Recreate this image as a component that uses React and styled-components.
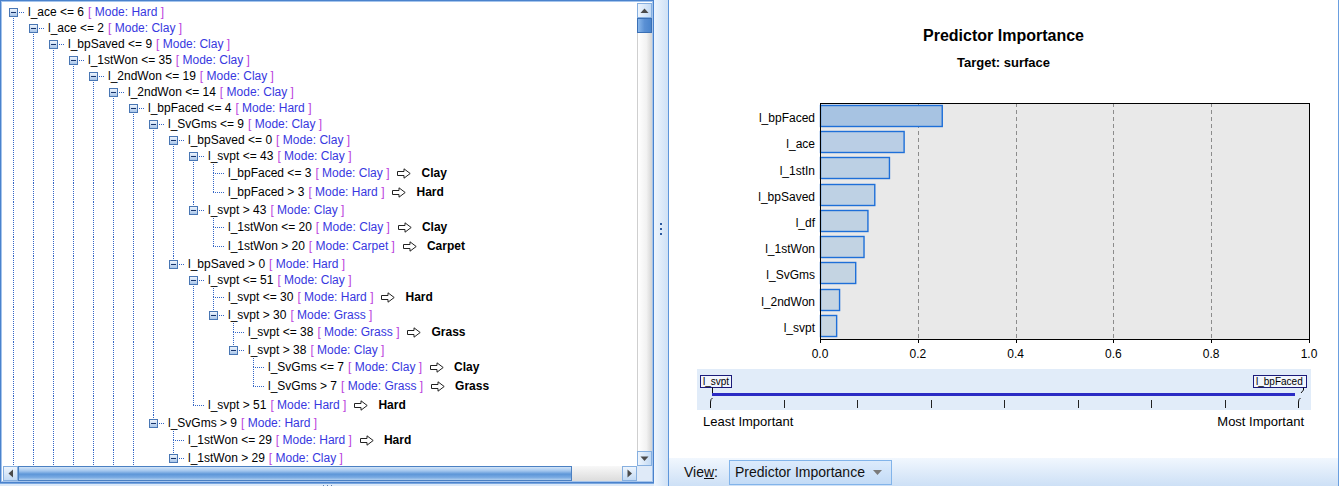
import React from "react";
import styled, { createGlobalStyle } from "styled-components";

const DOT = "#3466c6";
const VISIBLE_ROWS = 27;

const GlobalStyle = createGlobalStyle`
  html, body { margin: 0; padding: 0; background: #ffffff; overflow: hidden; }
  body { font-family: "Liberation Sans", Arial, sans-serif; color: #000; }
`;

// tree data: N = expanded node, L = leaf with prediction, C = collapsed node
const L = (label, mode) => ({ label, mode, result: mode });
const N = (label, mode, ...children) => ({ label, mode, children });
const C = (label, mode) => ({ label, mode, children: [], collapsed: true });

const svptBranch = N("l_bpSaved > 0", "Hard",
  N("l_svpt <= 51", "Clay",
    L("l_svpt <= 30", "Hard"),
    N("l_svpt > 30", "Grass",
      L("l_svpt <= 38", "Grass"),
      N("l_svpt > 38", "Clay",
        L("l_SvGms <= 7", "Clay"),
        L("l_SvGms > 7", "Grass")
      )
    )
  ),
  L("l_svpt > 51", "Hard")
);

const svGmsLow = N("l_SvGms <= 9", "Clay",
  N("l_bpSaved <= 0", "Clay",
    N("l_svpt <= 43", "Clay",
      L("l_bpFaced <= 3", "Clay"),
      L("l_bpFaced > 3", "Hard")
    ),
    N("l_svpt > 43", "Clay",
      L("l_1stWon <= 20", "Clay"),
      L("l_1stWon > 20", "Carpet")
    )
  ),
  svptBranch
);

const svGmsHigh = N("l_SvGms > 9", "Hard",
  L("l_1stWon <= 29", "Hard"),
  N("l_1stWon > 29", "Clay",
    L("l_df <= 2", "Clay"),
    L("l_df > 2", "Hard")
  )
);

const tree = [
  N("l_ace <= 6", "Hard",
    N("l_ace <= 2", "Clay",
      N("l_bpSaved <= 9", "Clay",
        N("l_1stWon <= 35", "Clay",
          N("l_2ndWon <= 19", "Clay",
            N("l_2ndWon <= 14", "Clay",
              N("l_bpFaced <= 4", "Hard", svGmsLow, svGmsHigh),
              C("l_bpFaced > 4", "Hard")
            ),
            C("l_2ndWon > 14", "Hard")
          ),
          C("l_2ndWon > 19", "Hard")
        ),
        C("l_1stWon > 35", "Grass")
      ),
      C("l_bpSaved > 9", "Hard")
    ),
    C("l_ace > 2", "Hard")
  ),
  C("l_ace > 6", "Hard"),
];

function flatten(nodes, depth, guides, out) {
  nodes.forEach((n, i) => {
    const hasNext = i < nodes.length - 1;
    out.push({ ...n, depth, guides, hasNext, first: i === 0 });
    if (n.children && !n.collapsed) flatten(n.children, depth + 1, [...guides, hasNext], out);
  });
}

const predictors = [
  ["l_bpFaced", 0.249, "#a7c3e2"],
  ["l_ace", 0.171, "#bacee5"],
  ["l_1stIn", 0.141, "#bcd0e4"],
  ["l_bpSaved", 0.111, "#bed1e4"],
  ["l_df", 0.097, "#c0d2e3"],
  ["l_1stWon", 0.089, "#c2d3e3"],
  ["l_SvGms", 0.072, "#c4d4e2"],
  ["l_2ndWon", 0.039, "#c6d5e2"],
  ["l_svpt", 0.033, "#c8d6e1"],
];

const vd = `repeating-linear-gradient(to bottom, ${DOT} 0 1px, transparent 1px 2px)`;
const hd = `repeating-linear-gradient(to right, ${DOT} 0 1px, transparent 1px 2px)`;

const jointBg = ({ $top, $bottom, $leaf, $cy }) => {
  const layers = [];
  if ($top) layers.push(`${vd} 10px 0 / 1px ${$cy}px no-repeat`);
  if ($bottom) layers.push(`${vd} 10px ${$cy}px / 1px calc(100% - ${$cy}px) no-repeat`);
  layers.push($leaf ? `${hd} 10px ${$cy}px / 12px 1px no-repeat` : `${hd} 16px ${$cy}px / 6px 1px no-repeat`);
  return layers.join(", ");
};

const Screen = styled.div`
  display: flex;
  width: 1340px;
  height: 486px;
  overflow: hidden;
`;

const LeftPane = styled.div`
  width: 654px;
  flex-shrink: 0;
  display: flex;
  flex-direction: column;
  background: #dce9f8;
`;

const Frame = styled.div`
  height: 483px;
  box-sizing: border-box;
  border: 1px solid #4a82cc;
  box-shadow: inset 0 0 0 1px #a4c4ec;
  padding: 2px 1px 1px 2px;
  background: #ffffff;
  display: grid;
  grid-template-columns: 1fr 15px;
  grid-template-rows: 1fr 15px;
`;

const TreeView = styled.div`
  overflow: hidden;
  min-width: 0;
  min-height: 0;
  padding-top: 1px;
  background: #ffffff;
`;

const Row = styled.div`
  display: flex;
  align-items: flex-start;
  height: ${(p) => (p.$leaf ? 19 : 16)}px;
  white-space: nowrap;
  font-size: 12px;
`;

const Guide = styled.span`
  width: 20px;
  flex-shrink: 0;
  align-self: stretch;
  background: ${(p) => (p.$on ? `${vd} 10px 0 / 1px 100% no-repeat` : "none")};
`;

const Joint = styled.span`
  width: 22px;
  flex-shrink: 0;
  align-self: stretch;
  display: flex;
  align-items: flex-start;
  background: ${jointBg};
`;

const Toggle = styled.span`
  width: 9px;
  height: 9px;
  box-sizing: border-box;
  margin: 4px 0 0 6px;
  border: 1px solid #4876b4;
  background: linear-gradient(#16346c, #16346c) center / 5px 1px no-repeat,
    ${(p) => (p.$open ? "" : "linear-gradient(#16346c, #16346c) center / 1px 5px no-repeat,")}
    linear-gradient(#eef4fc, #a9c6ea);
`;

const NodeText = styled.span`
  display: flex;
  align-items: center;
  margin-left: 3px;
  line-height: ${(p) => (p.$leaf ? 18 : 16)}px;
  height: ${(p) => (p.$leaf ? 18 : 16)}px;
`;

const Cond = styled.span`
  color: #000;
`;

const Mode = styled.span`
  color: #3838e0;
  margin-left: 4px;
`;

const Bracket = styled.span`
  color: #bb44dd;
`;

const ArrowIcon = styled.svg`
  margin: 0 10px 0 8px;
  flex-shrink: 0;
`;

const Result = styled.span`
  font-weight: bold;
`;

const VScroll = styled.div`
  display: flex;
  flex-direction: column;
  min-height: 0;
`;

const HScroll = styled.div`
  display: flex;
  min-width: 0;
`;

const ScrollBtn = styled.div`
  width: 15px;
  height: 15px;
  flex-shrink: 0;
  box-sizing: border-box;
  border: 1px solid #86afdf;
  background: linear-gradient(${(p) => (p.$h ? "to bottom" : "to right")}, #eef5fd, #c3daf4);
  display: flex;
  align-items: center;
  justify-content: center;
`;

const VThumb = styled.div`
  height: 15px;
  flex-shrink: 0;
  box-sizing: border-box;
  border: 1px solid #3a6fb5;
  background: linear-gradient(to right, #8ab8ec, #5a90d4 50%, #4a84cc);
`;

const VTrack = styled.div`
  flex: 1;
  box-sizing: border-box;
  border-left: 1px solid #cfcfcf;
  background: linear-gradient(to right, #ffffff, #f2f2f2 60%, #d4d4d4);
`;

const HThumb = styled.div`
  width: 554px;
  flex-shrink: 0;
  box-sizing: border-box;
  border: 1px solid #4b80c2;
  background: linear-gradient(to bottom, #d3e5f8 0%, #a3c6ee 30%, #5d96d8 55%, #79aae2 80%, #b2d0f0 100%);
`;

const HTrack = styled.div`
  flex: 1;
  background: linear-gradient(#f8f8f8, #dcdcdc);
`;

const Corner = styled.div`
  background: #dfeaf8;
`;

const PaneFoot = styled.div`
  flex: 1;
  display: flex;
  align-items: center;
  justify-content: center;
  border-top: 1px solid #7aa7df;
`;

const FootGrip = styled.span`
  width: 9px;
  height: 1px;
  background: repeating-linear-gradient(to right, #5a7fb0 0 1px, transparent 1px 4px);
`;

const Splitter = styled.div`
  width: 15px;
  flex-shrink: 0;
  box-sizing: border-box;
  border-right: 1px solid #5e96da;
  background: linear-gradient(to right, #eef5fd, #cfe1f6);
  display: flex;
  justify-content: center;
  padding-top: 223px;
`;

const SplitGrip = styled.span`
  width: 2px;
  height: 12px;
  background: repeating-linear-gradient(to bottom, #2c5aa0 0 2px, transparent 2px 5px);
`;

const RightPane = styled.div`
  flex: 1;
  margin-right: 1px;
  border-right: 1px solid #6a9fe0;
  display: flex;
  flex-direction: column;
  background: #ffffff;
  min-width: 0;
`;

const Viewer = styled.div`
  flex: 1;
  display: flex;
  flex-direction: column;
`;

const Title = styled.div`
  margin-top: 27px;
  text-align: center;
  font-size: 16px;
  font-weight: bold;
  line-height: 18px;
`;

const Subtitle = styled.div`
  margin-top: 10px;
  text-align: center;
  font-size: 13px;
  font-weight: bold;
  line-height: 16px;
`;

const ChartSvg = styled.svg`
  display: block;
  margin-top: 19px;
  font-family: "Liberation Sans", Arial, sans-serif;
  font-size: 12px;
`;

const SliderBox = styled.div`
  margin: 7px 0 0 28px;
  width: 614px;
  height: 41px;
  background: #e1ecf9;
`;

const SliderSvg = styled.svg`
  display: block;
  font-family: "Liberation Sans", Arial, sans-serif;
  font-size: 10px;
`;

const RangeLabels = styled.div`
  margin-top: 5px;
  display: flex;
  justify-content: space-between;
  padding: 0 34px;
  font-size: 13px;
  line-height: 14px;
`;

const ViewBar = styled.div`
  height: 28px;
  flex-shrink: 0;
  display: flex;
  align-items: center;
  gap: 11px;
  padding-left: 15px;
  background: linear-gradient(#f1f7fe, #cde0f6);
  font-size: 14px;
`;

const ViewLabel = styled.span`
  color: #111;
`;

const Dropdown = styled.div`
  width: 163px;
  height: 25px;
  box-sizing: border-box;
  border: 1px solid #82b4ea;
  background: linear-gradient(#dcebfc, #c3dbf6);
  display: flex;
  align-items: center;
  gap: 8px;
  padding-left: 5px;
  color: #111;
`;

const Tri = ({ dir }) => {
  const pts = {
    up: "0.5,5 4.5,0.5 8.5,5",
    down: "0.5,0.5 8.5,0.5 4.5,5",
    left: "5,0.5 5,8.5 0.5,4.5",
    right: "0.5,0.5 0.5,8.5 5,4.5",
  }[dir];
  const horiz = dir === "left" || dir === "right";
  return (
    <svg width={horiz ? 6 : 9} height={horiz ? 9 : 6}>
      <polygon points={pts} fill="#4a4a4a" />
    </svg>
  );
};

const Arrow = () => (
  <ArrowIcon width="14" height="11" viewBox="0 0 14 11">
    <path d="M0.5 3.5 H7 V0.8 L13.2 5.5 L7 10.2 V7.5 H0.5 Z" fill="#fff" stroke="#222" strokeWidth="1" strokeLinejoin="miter" />
  </ArrowIcon>
);

const TreeRow = ({ row, isRoot }) => {
  const leaf = !row.children;
  const cy = leaf ? 9 : 8;
  return (
    <Row $leaf={leaf}>
      {row.guides.map((on, k) => (
        <Guide key={k} $on={on} />
      ))}
      <Joint $leaf={leaf} $top={!isRoot && (!row.first || leaf)} $bottom={row.hasNext} $cy={cy}>
        {!leaf && <Toggle $open={!row.collapsed} />}
      </Joint>
      <NodeText $leaf={leaf}>
        <Cond>{row.label}</Cond>
        <Mode>
          <Bracket>[</Bracket> Mode: {row.mode} <Bracket>]</Bracket>
        </Mode>
        {leaf && (
          <>
            <Arrow />
            <Result>{row.result}</Result>
          </>
        )}
      </NodeText>
    </Row>
  );
};

const ImportanceChart = () => {
  const PL = 151, PR = 640, PT = 13, PB = 249;
  const W = PR - PL;
  const band = (PB - PT) / predictors.length;
  const ticks = [0, 0.2, 0.4, 0.6, 0.8, 1];
  return (
    <ChartSvg width="669" height="272" viewBox="0 0 669 272">
      <rect x={PL} y={PT} width={W} height={PB - PT} fill="#e9e9e9" />
      {ticks.slice(1, -1).map((t) => {
        const x = Math.round(PL + t * W) + 0.5;
        return <line key={t} x1={x} x2={x} y1={PT} y2={PB} stroke="#8c8c8c" strokeDasharray="4 3" />;
      })}
      {predictors.map(([name, v, fill], i) => {
        const y = Math.round(PT + i * band + 2) + 0.5;
        return (
          <g key={name}>
            <rect x={PL + 0.5} y={y} width={v * W} height={21} fill={fill} stroke="#1e6fd8" strokeWidth="1.4" />
            <text x={PL - 5} y={PT + (i + 0.5) * band + 6} textAnchor="end">
              {name}
            </text>
          </g>
        );
      })}
      <rect x={PL + 0.5} y={PT + 0.5} width={W} height={PB - PT} fill="none" stroke="#000" />
      {ticks.map((t) => {
        const x = Math.round(PL + t * W) + 0.5;
        return (
          <g key={t}>
            <line x1={x} x2={x} y1={PB} y2={PB + 4} stroke="#000" />
            <text x={PL + t * W} y={PB + 19} textAnchor="middle">
              {t.toFixed(1)}
            </text>
          </g>
        );
      })}
    </ChartSvg>
  );
};

const RangeSlider = () => {
  const ticks = [1, 2, 3, 4, 5, 6, 7].map((k) => Math.round(13 + 73.5 * k) + 0.5);
  return (
    <SliderBox>
      <SliderSvg width="614" height="41" viewBox="0 0 614 41">
        <rect x="3.5" y="6.5" width="31" height="12" fill="#f2f6fc" stroke="#1b1b7a" />
        <text x="6" y="16">l_svpt</text>
        <rect x="556.5" y="6.5" width="53" height="12" fill="#f2f6fc" stroke="#1b1b7a" />
        <text x="559" y="16">l_bpFaced</text>
        <path d="M15.5 18.5 V24" stroke="#111" fill="none" />
        <path d="M606.5 18.5 V21 L604 24" stroke="#111" fill="none" />
        <line x1="15" x2="598" y1="25.5" y2="25.5" stroke="#2b2bc4" strokeWidth="3" />
        <path d="M15.5 29 Q13.5 30 13.5 33 V39" stroke="#111" fill="none" />
        <path d="M603.5 29 Q601.5 30 601.5 33 V39" stroke="#111" fill="none" />
        {ticks.map((x) => (
          <line key={x} x1={x} x2={x} y1="31" y2="39" stroke="#222" />
        ))}
      </SliderSvg>
    </SliderBox>
  );
};

const Caret = () => (
  <svg width="9" height="5">
    <polygon points="0,0 9,0 4.5,5" fill="#7a7a7a" />
  </svg>
);

const App = () => {
  const rows = [];
  flatten(tree, 0, [], rows);
  const shown = rows.slice(0, VISIBLE_ROWS);
  return (
    <>
      <GlobalStyle />
      <Screen>
        <LeftPane>
          <Frame>
            <TreeView>
              {shown.map((r, i) => (
                <TreeRow key={i} row={r} isRoot={i === 0} />
              ))}
            </TreeView>
            <VScroll>
              <ScrollBtn>
                <Tri dir="up" />
              </ScrollBtn>
              <VThumb />
              <VTrack />
              <ScrollBtn>
                <Tri dir="down" />
              </ScrollBtn>
            </VScroll>
            <HScroll>
              <ScrollBtn $h>
                <Tri dir="left" />
              </ScrollBtn>
              <HThumb />
              <HTrack />
              <ScrollBtn $h>
                <Tri dir="right" />
              </ScrollBtn>
            </HScroll>
            <Corner />
          </Frame>
          <PaneFoot>
            <FootGrip />
          </PaneFoot>
        </LeftPane>
        <Splitter>
          <SplitGrip />
        </Splitter>
        <RightPane>
          <Viewer>
            <Title>Predictor Importance</Title>
            <Subtitle>Target: surface</Subtitle>
            <ImportanceChart />
            <RangeSlider />
            <RangeLabels>
              <span>Least Important</span>
              <span>Most Important</span>
            </RangeLabels>
          </Viewer>
          <ViewBar>
            <ViewLabel>
              Vie<u>w</u>:
            </ViewLabel>
            <Dropdown>
              Predictor Importance <Caret />
            </Dropdown>
          </ViewBar>
        </RightPane>
      </Screen>
    </>
  );
};

export default App;
